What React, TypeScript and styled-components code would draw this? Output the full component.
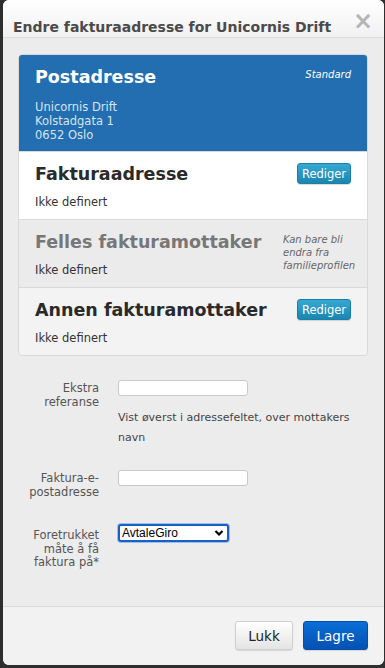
import React from "react";
import styled, { createGlobalStyle } from "styled-components";

const Global = createGlobalStyle`
  html, body { margin: 0; padding: 0; background: #2e2e2e; }
  body { font-family: "DejaVu Sans", Verdana, sans-serif; }
  * { box-sizing: border-box; }
`;

const Page = styled.div`
  width: 385px;
  height: 668px;
  padding: 0 1px 3px 3px;
  background: #2e2e2e;
`;

const Modal = styled.div`
  height: 665px;
  background: #ececec;
  border-radius: 6px;
  display: flex;
  flex-direction: column;
  overflow: hidden;
`;

const Header = styled.div`
  height: 38px;
  flex: none;
  display: flex;
  align-items: center;
  justify-content: space-between;
  padding: 17px 11px 0 10px;
  background: linear-gradient(#ffffff, #f1f1f1);
  border-bottom: 1px solid #dcdcdc;
`;

const Title = styled.h3`
  margin: 0;
  font-size: 14px;
  font-weight: bold;
  color: #4a4a4a;
  white-space: nowrap;
`;

const Close = styled.span`
  font-size: 24px;
  font-weight: bold;
  color: #b5b5b5;
  line-height: 1;
  margin-top: -12px;
`;

const Body = styled.div`
  flex: 1;
  padding: 16px 16px 0 15px;
`;

const Card = styled.div`
  border: 1px solid #d9d9d9;
  border-radius: 4px;
  overflow: hidden;
`;

const Section = styled.div<{ $bg: string; $h: number }>`
  background: ${(p) => p.$bg};
  height: ${(p) => p.$h}px;
  padding: 8px 16px 0 16px;
  border-bottom: 1px solid #dadada;
  &:last-child { border-bottom: none; }
`;

const Row = styled.div`
  display: flex;
  justify-content: space-between;
  align-items: flex-start;
`;

const SecTitle = styled.div<{ $color: string }>`
  font-size: 17.5px;
  font-weight: bold;
  color: ${(p) => p.$color};
  line-height: 28px;
`;

const Tag = styled.div`
  font-size: 10px;
  font-style: italic;
  color: #fff;
  margin-top: 6px;
`;

const Note = styled.div`
  font-size: 10px;
  font-style: italic;
  color: #666;
  line-height: 13px;
  width: 68px;
  margin-top: 5px;
`;

const Address = styled.div`
  margin-top: 9px;
  font-size: 11.5px;
  line-height: 14px;
  color: #d6e4f2;
`;

const Undef = styled.div<{ $mt: number }>`
  font-size: 11.5px;
  color: #333;
  margin-top: ${(p) => p.$mt}px;
`;

const Rediger = styled.button`
  margin-top: 3px;
  width: 54px;
  height: 21px;
  padding: 0;
  border: 1px solid #1a7ea5;
  border-radius: 3px;
  background: linear-gradient(#35a9d3, #1a86b2);
  color: #fff;
  font-family: inherit;
  font-size: 11.5px;
  box-shadow: 0 1px 1px rgba(0,0,0,0.15);
`;

const Form = styled.div`
  display: grid;
  grid-template-columns: 81px 1fr;
  column-gap: 19px;
  padding-top: 24px;
`;

const Label = styled.div<{ $mt: number }>`
  text-align: right;
  font-size: 11.5px;
  line-height: 13.5px;
  color: #555;
  padding-top: ${(p) => p.$mt}px;
`;

const Field = styled.div<{ $h: number }>`
  height: ${(p) => p.$h}px;
`;

const Input = styled.input`
  display: block;
  width: 130px;
  height: 16px;
  border: 1px solid #c9c9c9;
  border-radius: 3px;
  background: #fff;
  padding: 0 4px;
`;

const Help = styled.div`
  margin-top: 12px;
  font-size: 11px;
  line-height: 20px;
  color: #444;
`;

const SelectBox = styled.div`
  width: 111px;
  height: 18px;
  border: 2px solid #1a5fc8;
  border-radius: 3px;
  background: #fff;
  display: flex;
  align-items: center;
  justify-content: space-between;
  padding: 0 3px 0 2px;
  font-family: "Liberation Sans", Arial, sans-serif;
  font-size: 12px;
  color: #000;
  box-shadow: 0 0 0 1px #9cc0ee;
`;

const Footer = styled.div`
  flex: none;
  height: 59px;
  background: #f2f2f2;
  border-top: 1px solid #dadada;
  display: flex;
  justify-content: flex-end;
  align-items: flex-start;
  gap: 10px;
  padding: 14px 16px 0 0;
`;

const Btn = styled.button<{ $primary?: boolean }>`
  height: 29px;
  width: ${(p) => (p.$primary ? 65 : 58)}px;
  border-radius: 3px;
  font-family: inherit;
  font-size: 13.5px;
  padding: 0;
  border: 1px solid ${(p) => (p.$primary ? "#0450a8" : "#cfcfcf")};
  color: ${(p) => (p.$primary ? "#fff" : "#222")};
  background: ${(p) =>
    p.$primary
      ? "linear-gradient(#0a6ed6, #0451b3)"
      : "linear-gradient(#ffffff, #e4e4e4)"};
  box-shadow: 0 1px 1px rgba(0,0,0,0.12);
`;

export default function App() {
  return (
    <Page>
      <Global />
      <Modal>
        <Header>
          <Title>Endre fakturaadresse for Unicornis Drift</Title>
          <Close>×</Close>
        </Header>
        <Body>
          <Card>
            <Section $bg="#226eb0" $h={97}>
              <Row>
                <SecTitle $color="#fff">Postadresse</SecTitle>
                <Tag>Standard</Tag>
              </Row>
              <Address>
                Unicornis Drift
                <br />
                Kolstadgata 1
                <br />
                0652 Oslo
              </Address>
            </Section>
            <Section $bg="#ffffff" $h={68}>
              <Row>
                <SecTitle $color="#2a2a2a">Fakturaadresse</SecTitle>
                <Rediger>Rediger</Rediger>
              </Row>
              <Undef $mt={7}>Ikke definert</Undef>
            </Section>
            <Section $bg="#ebebeb" $h={68}>
              <Row>
                <SecTitle $color="#777">Felles fakturamottaker</SecTitle>
                <Note>Kan bare bli endra fra familieprofilen</Note>
              </Row>
              <Undef $mt={-9}>Ikke definert</Undef>
            </Section>
            <Section $bg="#f3f3f3" $h={67}>
              <Row>
                <SecTitle $color="#2a2a2a">Annen fakturamottaker</SecTitle>
                <Rediger>Rediger</Rediger>
              </Row>
              <Undef $mt={7}>Ikke definert</Undef>
            </Section>
          </Card>
          <Form>
            <Label $mt={2}>
              Ekstra
              <br />
              referanse
            </Label>
            <Field $h={90}>
              <Input />
              <Help>
                Vist øverst i adressefeltet, over mottakers
                <br />
                navn
              </Help>
            </Field>
            <Label $mt={2}>
              Faktura-e-
              <br />
              postadresse
            </Label>
            <Field $h={54}>
              <Input />
            </Field>
            <Label $mt={5}>
              Foretrukket
              <br />
              måte å få
              <br />
              faktura på*
            </Label>
            <Field $h={50}>
              <SelectBox>
                <span>AvtaleGiro</span>
                <svg width="10" height="8" viewBox="0 0 10 8">
                  <path d="M1.5 2 L5 5.5 L8.5 2" stroke="#000" strokeWidth="2.2" fill="none" />
                </svg>
              </SelectBox>
            </Field>
          </Form>
        </Body>
        <Footer>
          <Btn>Lukk</Btn>
          <Btn $primary>Lagre</Btn>
        </Footer>
      </Modal>
    </Page>
  );
}
